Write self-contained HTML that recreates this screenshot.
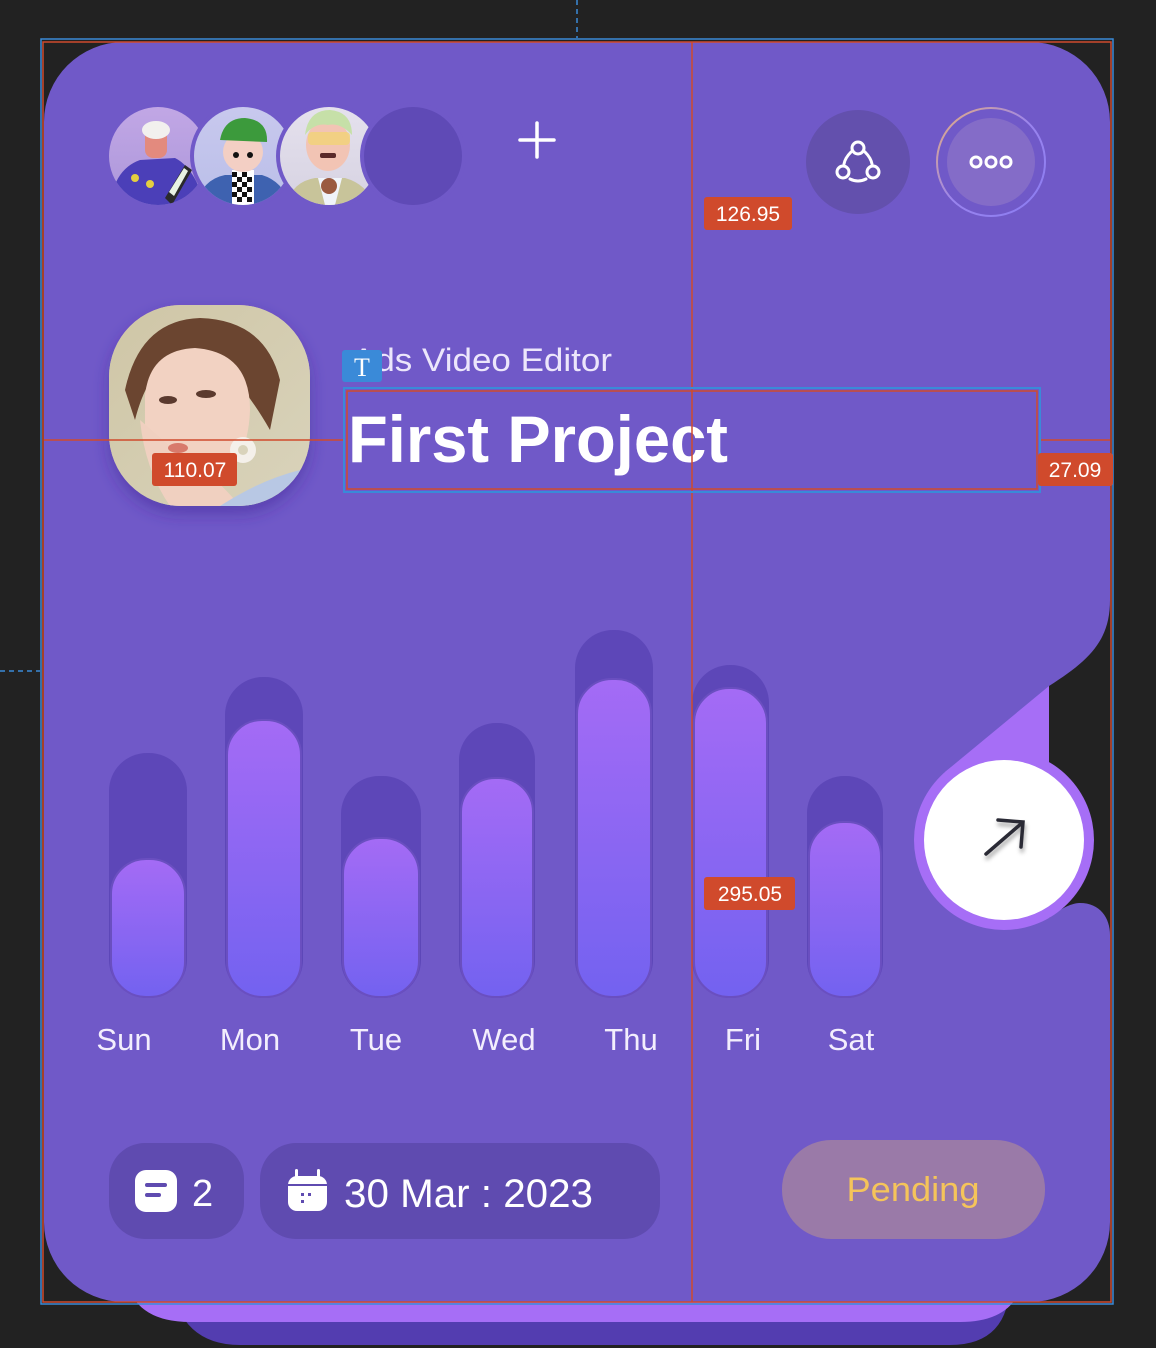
<!DOCTYPE html>
<html><head><meta charset="utf-8"><style>
html,body{margin:0;padding:0;background:#222222;}
svg{display:block;font-family:"Liberation Sans",sans-serif;}
</style></head><body>
<svg width="1156" height="1348" viewBox="0 0 1156 1348" xmlns="http://www.w3.org/2000/svg">
<defs>
<linearGradient id="bar" x1="0" y1="0" x2="0" y2="1"><stop offset="0" stop-color="#a46bf5"/><stop offset="1" stop-color="#7362f0"/></linearGradient>
<linearGradient id="ring" x1="0" y1="0" x2="1" y2="1"><stop offset="0" stop-color="#e8b07a"/><stop offset="0.5" stop-color="#9a84ee"/><stop offset="1" stop-color="#8a7cf2"/></linearGradient>
<linearGradient id="a1" x1="0" y1="0" x2="0" y2="1"><stop offset="0" stop-color="#c3a8e6"/><stop offset="1" stop-color="#a894d8"/></linearGradient>
<linearGradient id="a2" x1="0" y1="0" x2="0" y2="1"><stop offset="0" stop-color="#c9c9ee"/><stop offset="1" stop-color="#b8bde8"/></linearGradient>
<linearGradient id="a3" x1="0" y1="0" x2="0" y2="1"><stop offset="0" stop-color="#e6e2ee"/><stop offset="1" stop-color="#d4d0e0"/></linearGradient>
<linearGradient id="ph" x1="0" y1="0" x2="1" y2="1"><stop offset="0" stop-color="#cfc6a6"/><stop offset="1" stop-color="#d9d3bb"/></linearGradient>
<clipPath id="c1"><circle cx="158" cy="156" r="49"/></clipPath>
<clipPath id="c2"><circle cx="243" cy="156" r="49"/></clipPath>
<clipPath id="c3"><circle cx="329" cy="156" r="49"/></clipPath>
<clipPath id="cp"><rect x="109" y="305" width="201" height="201" rx="72"/></clipPath>
<filter id="sh" x="-20%" y="-20%" width="140%" height="150%"><feDropShadow dx="0" dy="8" stdDeviation="8" flood-color="#3a2790" flood-opacity="0.45"/></filter>
<filter id="ash" x="-30%" y="-30%" width="160%" height="160%"><feDropShadow dx="1" dy="4" stdDeviation="2" flood-color="#000" flood-opacity="0.35"/></filter>
</defs>

<!-- stacked layers below -->
<path d="M170 1280 H1010 Q1010 1345 950 1345 H240 Q180 1345 170 1280Z" fill="#533db0"/>
<path d="M124 1270 H1025 Q1020 1322 960 1322 H190 Q130 1322 124 1270Z" fill="#a66ef6"/>

<!-- card -->
<path d="M124 42 H1030 A80 80 0 0 1 1110 122 V600 C1110 640 1090 660 1049 686 V918 C1065 905 1075 903 1080 903 C1100 903 1110 918 1110 935 V1222 A80 80 0 0 1 1030 1302 H124 A80 80 0 0 1 44 1222 V122 A80 80 0 0 1 124 42Z" fill="#7059c8"/>
<!-- light notch -->
<polygon points="1049,686 945,772 1004,840 1049,840" fill="#a66ef6"/>
<circle cx="1004" cy="840" r="90" fill="#a66ef6"/>
<circle cx="1004" cy="840" r="80" fill="#ffffff"/>
<g filter="url(#ash)" stroke="#2a2a35" stroke-width="3.5" stroke-linecap="round" fill="none">
<path d="M986 854 L1022 823"/><path d="M998 820 L1023 822 L1021 847"/>
</g>

<!-- avatars -->
<g clip-path="url(#c1)">
<rect x="100" y="100" width="120" height="120" fill="url(#a1)"/>
<path d="M110 210 Q112 170 140 160 L175 158 Q195 168 205 205 Z" fill="#4b3fb8"/>
<rect x="145" y="128" width="22" height="30" rx="8" fill="#e38a7e"/>
<ellipse cx="156" cy="130" rx="14" ry="9" fill="#f2f0ee"/>
<circle cx="135" cy="178" r="4" fill="#e4cf40"/><circle cx="150" cy="184" r="4" fill="#e4cf40"/>
<path d="M165 198 L185 165 L192 170 L172 205Z" fill="#2a2a2a"/><path d="M169 192 L184 168 L188 171 L174 196Z" fill="#e8f2e4"/>
</g>
<circle cx="243" cy="156" r="53" fill="#7059c8"/>
<g clip-path="url(#c2)">
<rect x="190" y="100" width="110" height="120" fill="url(#a2)"/>
<path d="M195 210 Q200 180 225 175 L262 175 Q285 182 292 210Z" fill="#3e62b0"/>
<rect x="232" y="170" width="22" height="40" fill="#fff"/>
<g fill="#111"><rect x="232" y="172" width="5" height="5"/><rect x="242" y="172" width="5" height="5"/><rect x="237" y="177" width="5" height="5"/><rect x="247" y="177" width="5" height="5"/><rect x="232" y="182" width="5" height="5"/><rect x="242" y="182" width="5" height="5"/><rect x="237" y="187" width="5" height="5"/><rect x="247" y="187" width="5" height="5"/><rect x="232" y="192" width="5" height="5"/><rect x="242" y="192" width="5" height="5"/><rect x="237" y="197" width="5" height="5"/><rect x="247" y="197" width="5" height="5"/></g>
<ellipse cx="243" cy="152" rx="20" ry="20" fill="#f3cfc4"/>
<path d="M220 140 Q224 118 245 118 Q268 120 267 142 Z" fill="#3c9a3c"/>
<circle cx="236" cy="155" r="3" fill="#111"/><circle cx="250" cy="155" r="3" fill="#111"/>
</g>
<circle cx="329" cy="156" r="53" fill="#7059c8"/>
<g clip-path="url(#c3)">
<rect x="275" y="100" width="110" height="120" fill="url(#a3)"/>
<path d="M285 210 Q290 182 315 178 L345 178 Q370 185 375 210Z" fill="#c8c49a"/>
<path d="M318 178 L342 178 L335 205 L325 205Z" fill="#f0f4fa"/>
<ellipse cx="328" cy="145" rx="22" ry="26" fill="#f2c4b4"/>
<path d="M305 135 Q308 110 330 110 Q352 112 352 135 Q340 122 328 125 Q315 122 305 135Z" fill="#c6e0a8"/>
<rect x="308" y="132" width="42" height="13" rx="4" fill="#f2d27a" opacity="0.85"/>
<rect x="320" y="153" width="16" height="5" rx="2" fill="#5a2a2a"/>
<circle cx="329" cy="186" r="8" fill="#9a5a40"/>
</g>
<circle cx="413" cy="156" r="53" fill="#7059c8"/>
<circle cx="413" cy="156" r="49" fill="#5f4ab6"/>

<!-- plus -->
<g stroke="#ffffff" stroke-width="3.5" stroke-linecap="round"><line x1="537" y1="123" x2="537" y2="157"/><line x1="520" y1="140" x2="554" y2="140"/></g>

<!-- share button -->
<circle cx="858" cy="162" r="52" fill="#6350ad"/>
<g stroke="#fff" stroke-width="3" fill="none" stroke-linecap="round">
<circle cx="858" cy="148" r="6"/><circle cx="843" cy="172" r="6"/><circle cx="873" cy="172" r="6"/>
<path d="M851 152 Q845 158 844 164"/><path d="M865 152 Q871 158 872 164"/><path d="M850 179 Q858 183 866 179"/>
</g>

<!-- more button -->
<circle cx="991" cy="162" r="54" fill="none" stroke="url(#ring)" stroke-width="2"/>
<circle cx="991" cy="162" r="44" fill="#846cc8"/>
<g stroke="#fff" stroke-width="3" fill="none"><circle cx="976" cy="162" r="5"/><circle cx="991" cy="162" r="5"/><circle cx="1006" cy="162" r="5"/></g>

<!-- photo -->
<g filter="url(#sh)">
<rect x="109" y="305" width="201" height="201" rx="72" fill="url(#ph)"/>
</g>
<g clip-path="url(#cp)">
<rect x="109" y="305" width="201" height="201" fill="url(#ph)"/>
<path d="M125 390 Q140 320 200 318 Q265 320 280 380 L270 430 Q230 360 190 350 Q150 360 135 420Z" fill="#6b4530"/>
<path d="M145 395 Q150 350 195 348 Q250 352 250 410 Q248 470 205 490 Q160 490 145 440Z" fill="#f2d2c2"/>
<path d="M140 420 Q145 470 170 506 L240 506 Q210 470 180 455Z" fill="#f0d0c0"/>
<ellipse cx="168" cy="400" rx="9" ry="4" fill="#5b3a2e"/><ellipse cx="206" cy="394" rx="10" ry="4" fill="#5b3a2e"/>
<ellipse cx="178" cy="448" rx="10" ry="5" fill="#d87a6c"/>
<path d="M220 506 Q260 480 300 470 L310 506Z" fill="#b8c8e4"/>
<circle cx="243" cy="450" r="13" fill="#f4f0ea"/><circle cx="243" cy="450" r="5" fill="#d9d3bb"/>
</g>

<!-- subtitle & title -->
<text x="352" y="371" font-size="32" fill="#ece6fb" textLength="260" lengthAdjust="spacingAndGlyphs">Ads Video Editor</text>
<text x="348" y="462" font-size="66" font-weight="bold" fill="#ffffff" textLength="380" lengthAdjust="spacingAndGlyphs">First Project</text>

<!-- bars -->
<g>
<rect x="109" y="753" width="78" height="245" rx="38" fill="#5d47b8"/>
<rect x="111" y="859" width="74" height="138" rx="35" fill="url(#bar)" stroke="#6a4fc0" stroke-width="2"/>
<rect x="225" y="677" width="78" height="321" rx="38" fill="#5d47b8"/>
<rect x="227" y="720" width="74" height="277" rx="35" fill="url(#bar)" stroke="#6a4fc0" stroke-width="2"/>
<rect x="341" y="776" width="80" height="222" rx="38" fill="#5d47b8"/>
<rect x="343" y="838" width="76" height="159" rx="36" fill="url(#bar)" stroke="#6a4fc0" stroke-width="2"/>
<rect x="459" y="723" width="76" height="275" rx="37" fill="#5d47b8"/>
<rect x="461" y="778" width="72" height="219" rx="34" fill="url(#bar)" stroke="#6a4fc0" stroke-width="2"/>
<rect x="575" y="630" width="78" height="368" rx="38" fill="#5d47b8"/>
<rect x="577" y="679" width="74" height="318" rx="35" fill="url(#bar)" stroke="#6a4fc0" stroke-width="2"/>
<rect x="692" y="665" width="77" height="333" rx="38" fill="#5d47b8"/>
<rect x="694" y="688" width="73" height="309" rx="35" fill="url(#bar)" stroke="#6a4fc0" stroke-width="2"/>
<rect x="807" y="776" width="76" height="222" rx="37" fill="#5d47b8"/>
<rect x="809" y="822" width="72" height="175" rx="34" fill="url(#bar)" stroke="#6a4fc0" stroke-width="2"/>
</g>

<!-- day labels -->
<g font-size="31" fill="#f3eefd" text-anchor="middle">
<text x="124" y="1050">Sun</text><text x="250" y="1050">Mon</text><text x="376" y="1050">Tue</text><text x="504" y="1050">Wed</text><text x="631" y="1050">Thu</text><text x="743" y="1050">Fri</text><text x="851" y="1050">Sat</text>
</g>

<!-- bottom pills -->
<rect x="109" y="1143" width="135" height="96" rx="36" fill="#5f4bb0"/>
<rect x="135" y="1170" width="42" height="42" rx="11" fill="#fff"/>
<rect x="145" y="1183" width="22" height="4" rx="2" fill="#5f4bb0"/><rect x="145" y="1193" width="16" height="4" rx="2" fill="#5f4bb0"/>
<text x="192" y="1206" font-size="38" fill="#fff">2</text>
<rect x="260" y="1143" width="400" height="96" rx="36" fill="#5f4bb0"/>
<rect x="288" y="1176" width="39" height="35" rx="9" fill="#fff"/>
<rect x="295" y="1169" width="3" height="10" rx="1.5" fill="#fff"/><rect x="317" y="1169" width="3" height="10" rx="1.5" fill="#fff"/>
<rect x="288" y="1184" width="39" height="2" fill="#5f4bb0"/>
<rect x="301" y="1193" width="3" height="3" fill="#5f4bb0"/><rect x="308" y="1193" width="3" height="3" fill="#5f4bb0"/><rect x="301" y="1200" width="3" height="3" fill="#5f4bb0"/>
<text x="344" y="1207" font-size="40" fill="#fff" textLength="249" lengthAdjust="spacingAndGlyphs">30 Mar : 2023</text>
<rect x="782" y="1140" width="263" height="99" rx="49" fill="#9a7aa8"/>
<text x="913" y="1201" font-size="34" fill="#f5c45a" text-anchor="middle" textLength="133" lengthAdjust="spacingAndGlyphs">Pending</text>

<!-- overlay guides -->
<line x1="577" y1="0" x2="577" y2="38" stroke="#3a8ad8" stroke-width="1.5" stroke-dasharray="5,4"/>
<line x1="0" y1="671" x2="40" y2="671" stroke="#3a8ad8" stroke-width="1.5" stroke-dasharray="5,4"/>
<rect x="41" y="39" width="1072" height="1265" fill="none" stroke="#3a8ad8" stroke-width="1.5"/>
<rect x="43" y="42" width="1068" height="1260" fill="none" stroke="#d04a2c" stroke-width="1.5"/>
<line x1="692" y1="42" x2="692" y2="1302" stroke="#d04a2c" stroke-width="1.5"/>
<line x1="44" y1="440" x2="345" y2="440" stroke="#d04a2c" stroke-width="1.5"/>
<line x1="1039" y1="440" x2="1110" y2="440" stroke="#d04a2c" stroke-width="1.5"/>
<rect x="344" y="388" width="696" height="104" fill="none" stroke="#3a8ad8" stroke-width="2"/>
<rect x="347" y="391" width="690" height="98" fill="none" stroke="#d04a2c" stroke-width="1.5"/>
<rect x="342" y="350" width="40" height="32" rx="3" fill="#3a8ad8"/>
<text x="362" y="376" font-size="26" fill="#fff" text-anchor="middle" font-family="Liberation Serif, serif">T</text>

<g font-size="21" fill="#fff" text-anchor="middle">
<rect x="704" y="197" width="88" height="33" rx="3" fill="#d04a2c"/><text x="748" y="221">126.95</text>
<rect x="152" y="453" width="85" height="33" rx="3" fill="#d04a2c"/><text x="195" y="477">110.07</text>
<rect x="1038" y="453" width="75" height="33" rx="3" fill="#d04a2c"/><text x="1075" y="477">27.09</text>
<rect x="704" y="877" width="91" height="33" rx="3" fill="#d04a2c"/><text x="750" y="901">295.05</text>
</g>
</svg>
</body></html>
